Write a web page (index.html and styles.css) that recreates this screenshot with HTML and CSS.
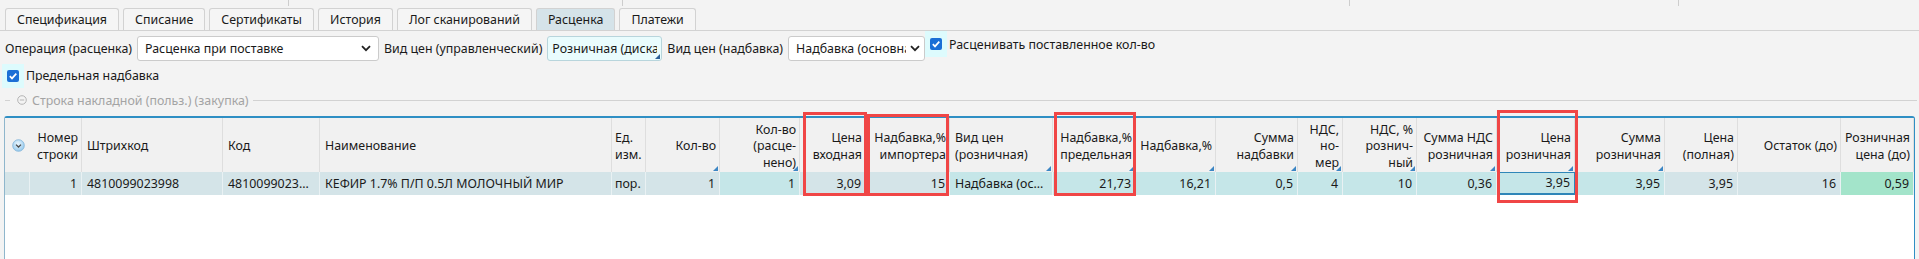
FILE: index.html
```html
<!DOCTYPE html>
<html lang="ru">
<head>
    <meta charset="UTF-8">
    <title>Расценка</title>
    <link rel="stylesheet" href="styles.css">
</head>
<body>
    <div class="toolbar">
        <div class="tool-cell w1"></div>
        <div class="tool-cell w2"></div>
        <div class="tool-cell w3"></div>
        <div class="tool-cell w4"></div>
    </div>

    <div class="tabs">
        <div class="tab">Спецификация</div>
        <div class="tab">Списание</div>
        <div class="tab">Сертификаты</div>
        <div class="tab">История</div>
        <div class="tab">Лог сканирований</div>
        <div class="tab active">Расценка</div>
        <div class="tab">Платежи</div>
    </div>

    <div class="form-row">
        <span class="label">Операция (расценка)</span>
        <div class="select op-select">
            <span class="select-text">Расценка при поставке</span>
            <svg class="chevron" width="10" height="7" viewBox="0 0 10 7"><path d="M1 1.2 L5 5.2 L9 1.2" fill="none" stroke="#222" stroke-width="1.8"/></svg>
        </div>
        <span class="label">Вид цен (управленческий)</span>
        <div class="field price-field">
            <span class="select-text">Розничная (дискаунтер)</span>
        </div>
        <span class="label">Вид цен (надбавка)</span>
        <div class="select markup-select">
            <span class="select-text">Надбавка (основная)</span>
            <svg class="chevron" width="10" height="7" viewBox="0 0 10 7"><path d="M1 1.2 L5 5.2 L9 1.2" fill="none" stroke="#222" stroke-width="1.8"/></svg>
        </div>
        <label class="check top-check">
            <span class="check-box"><svg width="12" height="12" viewBox="0 0 12 12"><rect width="12" height="12" rx="2" fill="#1b6fd6"/><path d="M2.8 6.2 L5 8.4 L9.3 3.6" fill="none" stroke="#fff" stroke-width="1.7"/></svg></span>
            <span>Расценивать поставленное кол-во</span>
        </label>
    </div>

    <div class="form-row second">
        <label class="check">
            <span class="check-box"><svg width="12" height="12" viewBox="0 0 12 12"><rect width="12" height="12" rx="2" fill="#1b6fd6"/><path d="M2.8 6.2 L5 8.4 L9.3 3.6" fill="none" stroke="#fff" stroke-width="1.7"/></svg></span>
            <span>Предельная надбавка</span>
        </label>
    </div>

    <div class="group-title">
        <span class="dash"></span>
        <svg width="10" height="10" viewBox="0 0 10 10"><circle cx="5" cy="5" r="4.3" fill="none" stroke="#b5b5b5" stroke-width="1"/><path d="M2.8 5 H7.2" stroke="#b5b5b5" stroke-width="1"/></svg>
        <span class="group-text">Строка накладной (польз.) (закупка)</span>
        <span class="group-line"></span>
    </div>

    <div class="grid-wrap">
        <div class="grid">
            <div class="hd icon-cell">
                <svg width="13" height="13" viewBox="0 0 13 13">
                    <defs>
                        <radialGradient id="g" cx="0.45" cy="0.35" r="0.7">
                            <stop offset="0" stop-color="#e9f5fd"/>
                            <stop offset="1" stop-color="#8fc6ec"/>
                        </radialGradient>
                    </defs>
                    <circle cx="6.5" cy="6.5" r="5.8" fill="url(#g)" stroke="#7eb3d8" stroke-width="0.8"/>
                    <path d="M4 5.6 L6.5 8 L9 5.6" fill="none" stroke="#4a4a4a" stroke-width="1.3"/>
                </svg>
            </div>
            <div class="hd r">Номер<br>строки</div>
            <div class="hd">Штрихкод</div>
            <div class="hd">Код</div>
            <div class="hd">Наименование</div>
            <div class="hd narrow">Ед.<br>изм.</div>
            <div class="hd r edit">Кол-во</div>
            <div class="hd r edit">Кол-во<br>(расце-<br>нено)</div>
            <div class="hd r">Цена<br>входная</div>
            <div class="hd r">Надбавка,%<br>импортера</div>
            <div class="hd edit">Вид цен<br>(розничная)</div>
            <div class="hd r edit">Надбавка,%<br>предельная</div>
            <div class="hd r edit">Надбавка,%</div>
            <div class="hd r edit">Сумма<br>надбавки</div>
            <div class="hd r edit">НДС,<br>но-<br>мер</div>
            <div class="hd r edit">НДС, %<br>рознич-<br>ный</div>
            <div class="hd r edit">Сумма НДС<br>розничная</div>
            <div class="hd r edit">Цена<br>розничная</div>
            <div class="hd r edit">Сумма<br>розничная</div>
            <div class="hd r">Цена<br>(полная)</div>
            <div class="hd r">Остаток (до)</div>
            <div class="hd r">Розничная<br>цена (до)</div>

            <div class="cell gray"></div>
            <div class="cell gray r">1</div>
            <div class="cell gray">4810099023998</div>
            <div class="cell gray">4810099023998</div>
            <div class="cell gray">КЕФИР 1.7% П/П 0.5Л МОЛОЧНЫЙ МИР</div>
            <div class="cell gray narrow">пор.</div>
            <div class="cell gray r">1</div>
            <div class="cell teal r">1</div>
            <div class="cell gray r">3,09</div>
            <div class="cell gray r">15</div>
            <div class="cell teal">Надбавка (основная)</div>
            <div class="cell teal r">21,73</div>
            <div class="cell teal r">16,21</div>
            <div class="cell teal r">0,5</div>
            <div class="cell teal r">4</div>
            <div class="cell teal r">10</div>
            <div class="cell teal r">0,36</div>
            <div class="cell teal r selected">3,95</div>
            <div class="cell teal r">3,95</div>
            <div class="cell gray r">3,95</div>
            <div class="cell gray r">16</div>
            <div class="cell green r">0,59</div>
        </div>

        <!-- annotation frames -->
        <div class="mark m1"></div>
        <div class="mark m2"></div>
        <div class="mark m3"></div>
        <div class="mark m4"></div>
    </div>
</body>
</html>
```

FILE: styles.css
```css
:root {
    --page-bg: #f3f3f3;
    --line-color: #d2d2d2;
    --row-gray: #d4e4e8;
    --row-teal: #c5e6e8;
    --row-green: #a3e4ca;
    --frame-blue: #2f8fc4;
    --mark-red: #f04646;
    --text-color: #1a1a1a;
}

* {
    margin: 0;
    padding: 0;
    box-sizing: border-box;
}

body {
    height: 259px;
    overflow: hidden;
    background-color: var(--page-bg);
    font-family: "Noto Sans", "Open Sans", sans-serif;
    font-size: 12.4px;
    color: var(--text-color);
}

/* remains of the toolbar above */
.toolbar {
    display: flex;
    height: 6px;
}

.tool-cell {
    border-right: 1px solid #cdcdcd;
}

.w1 { width: 289px; }
.w2 { width: 334px; }
.w3 { width: 727px; }
.w4 { width: 329px; }

/* tabs */
.tabs {
    display: flex;
    gap: 4px;
    margin-top: 2px;
    padding-left: 5px;
    border-bottom: 1px solid var(--line-color);
}

.tab {
    height: 22px;
    padding: 0 11px;
    display: flex;
    align-items: center;
    border: 1px solid var(--line-color);
    border-bottom: none;
    border-radius: 3px 3px 0 0;
    background-color: #f5f5f5;
}

.tab.active {
    background-color: #d5e3e9;
}

/* form rows */
.form-row {
    display: flex;
    align-items: center;
    gap: 5px;
    padding-left: 5px;
    margin-top: 5px;
    height: 25px;
}

.label {
    white-space: nowrap;
}

.select,
.field {
    height: 25px;
    display: flex;
    align-items: center;
    background-color: #fff;
    border: 1px solid #cbcbcb;
    border-radius: 3px;
    padding: 0 7px;
    overflow: hidden;
    position: relative;
}

.select-text {
    flex: 1;
    white-space: nowrap;
    overflow: hidden;
}

.chevron {
    flex-shrink: 0;
    margin-left: 4px;
}

.op-select { width: 242px; }
.markup-select { width: 137px; padding-right: 4px; }

.price-field {
    width: 115px;
    padding: 0 4px;
    background-color: #e9fcfd;
    border-color: #b8d5dc;
}

.price-field::after {
    content: "";
    position: absolute;
    right: 1px;
    bottom: 1px;
    border-left: 5px solid transparent;
    border-bottom: 5px solid #2a5f96;
}

.check {
    display: flex;
    align-items: center;
    gap: 2px;
    white-space: nowrap;
}

.check-box {
    width: 22px;
    height: 24px;
    display: flex;
    align-items: center;
    justify-content: center;
    background-color: #ddfbfd;
}

.check-box svg {
    display: block;
}

.top-check {
    margin-left: -5px;
    align-self: flex-start;
    margin-top: -5px;
}

.top-check .check-box {
    height: 26px;
}

.form-row.second {
    margin-top: 2px;
    padding-left: 2px;
}

/* group caption */
.group-title {
    display: flex;
    align-items: center;
    gap: 3px;
    margin-top: 4px;
    padding-left: 5px;
    padding-right: 2px;
    height: 16px;
    color: #a4a4a4;
}

.group-title svg {
    margin-left: 4px;
    margin-right: 2px;
}

.dash {
    width: 5px;
    border-top: 1px solid var(--line-color);
}

.group-line {
    flex: 1;
    border-top: 1px solid var(--line-color);
    margin-left: 1px;
}

/* grid */
.grid-wrap {
    position: relative;
    margin: 8px 4px 0 4px;
    width: 1911px;
    height: 143px;
    background-color: #fff;
    border: 1px solid #8fb6cc;
    border-top: 2px solid var(--frame-blue);
    border-right-color: var(--frame-blue);
    border-bottom: none;
    border-radius: 3px 3px 0 0;
}

.grid {
    display: grid;
    grid-template-columns: 25px 52px 141px 97px 292px 34px 74px 80px 66px 84px 103px 83px 80px 82px 45px 74px 80px 78px 90px 73px 103px 73px;
    grid-template-rows: 54px 23px;
}

.hd {
    position: relative;
    display: flex;
    align-items: center;
    padding: 3px 3px 0 5px;
    line-height: 16.5px;
    background-color: #f1f1f1;
    border-right: 1px solid #dedede;
    white-space: nowrap;
}

.hd.r {
    justify-content: flex-end;
    text-align: right;
}

.hd.edit::after {
    content: "";
    position: absolute;
    right: 1px;
    bottom: 1px;
    border-left: 5px solid transparent;
    border-bottom: 5px solid #3c86c4;
}

.icon-cell {
    justify-content: center;
    padding: 0 0 0 2px;
    border-right: none;
}

.icon-cell svg {
    display: block;
}

.cell {
    padding: 0 4px 0 5px;
    line-height: 23px;
    white-space: nowrap;
    overflow: hidden;
    text-overflow: ellipsis;
    border-right: 1px solid #e9f1f3;
}

.cell.r {
    text-align: right;
}

.hd.narrow,
.cell.narrow {
    padding-left: 3px;
    padding-right: 1px;
    text-overflow: clip;
}

.gray { background-color: var(--row-gray); }
.teal { background-color: var(--row-teal); }
.green { background-color: var(--row-green); }

.cell.selected {
    border: 1px solid #2f86b8;
    border-bottom-width: 2px;
    line-height: 20px;
}

/* red frames drawn over the grid */
.mark {
    position: absolute;
    border: 3px solid var(--mark-red);
}

.m1 { left: 798px; top: -6px; width: 64px; height: 84px; }
.m2 { left: 862px; top: -4px; width: 82px; height: 82px; }
.m3 { left: 1049px; top: -6px; width: 82px; height: 84px; }
.m4 { left: 1492px; top: -8px; width: 81px; height: 93px; }
```
